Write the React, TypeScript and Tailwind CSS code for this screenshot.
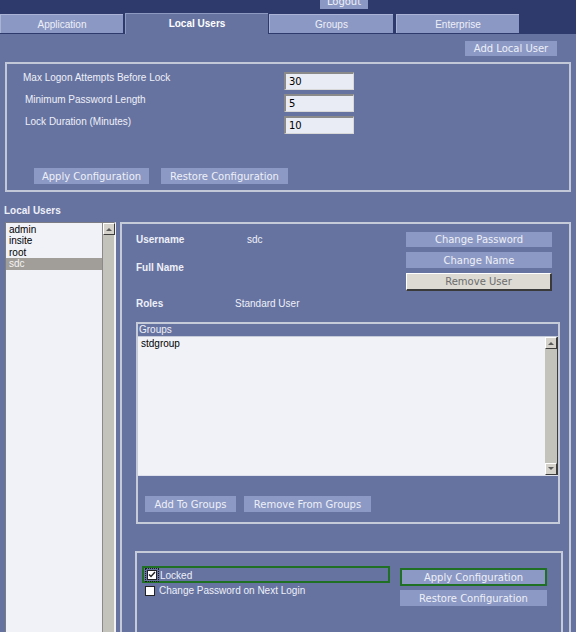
import type { ReactNode } from 'react';

const dejavu = "font-['DejaVu_Sans',sans-serif]";
const arial = "font-['Liberation_Sans',Arial,sans-serif]";

function Btn({ children, className = '' }: { children: ReactNode; className?: string }) {
  return (
    <div
      className={`flex shrink-0 items-center justify-center bg-[#8c99c4] pt-[1px] text-[10px] leading-none text-[#eef0f8] ${dejavu} ${className}`}
    >
      {children}
    </div>
  );
}

function Field({ value }: { value: string }) {
  return (
    <div
      className={`flex h-[18px] w-[70px] items-center border-t-2 border-l-2 border-r border-b border-t-[#8a8a8a] border-l-[#8a8a8a] border-r-[#d8d8d8] border-b-[#d8d8d8] bg-[#e9ebf5] pt-[1px] pl-[3px] text-[10px] leading-none text-black ${dejavu}`}
    >
      {value}
    </div>
  );
}

function ScrollArrow({ down = false }: { down?: boolean }) {
  return (
    <div className="flex h-[12px] w-[12px] items-center justify-center border-t border-l border-b border-r border-t-white border-l-white border-b-[#3c3c3c] border-r-[#3c3c3c] bg-[#d4d2cb]">
      <svg width="6" height="4" viewBox="0 0 6 4" className={down ? 'rotate-180' : ''}>
        <polygon points="0,4 3,1 6,4" fill="#5a5a5a" />
      </svg>
    </div>
  );
}

function Tab({ label, width, active = false }: { label: string; width: string; active?: boolean }) {
  return active ? (
    <div
      className={`flex h-[21px] ${width} items-center justify-center border-t border-l border-[#8e99c2] bg-[#6673a1] pb-[1px] text-[10px] font-bold text-white ${arial}`}
    >
      {label}
    </div>
  ) : (
    <div
      className={`mt-[1px] flex h-[19px] ${width} items-center justify-center border-t border-l border-[#aab3d6] bg-[#8b98c4] text-[10px] text-[#eef0f8] ${arial}`}
    >
      {label}
    </div>
  );
}

export default function App() {
  const users = ['admin', 'insite', 'root', 'sdc'];

  return (
    <div className="flex h-[632px] w-[576px] flex-col overflow-hidden bg-[#6673a1]">
      <header className="flex h-[34px] shrink-0 flex-col bg-[#2e3a6b]">
        <div className="h-[13px] pl-[320px]">
          <div className="h-[9px] w-[48px] overflow-hidden bg-[#8b98c4] text-center">
            <div className={`-mt-[3px] text-[10px] leading-[10px] text-[#eef0f8] ${dejavu}`}>Logout</div>
          </div>
        </div>
        <nav className="flex h-[21px] items-start">
          <Tab label="Application" width="w-[123px]" />
          <div className="w-[2px]" />
          <Tab label="Local Users" width="w-[143px]" active />
          <div className="w-[1px]" />
          <Tab label="Groups" width="w-[124px]" />
          <div className="w-[3px]" />
          <Tab label="Enterprise" width="w-[123px]" />
        </nav>
      </header>

      <main className="flex min-h-0 flex-1 flex-col">
        <div className="flex justify-end pt-[7px] pr-[19px]">
          <Btn className="h-[15px] w-[92px]">Add Local User</Btn>
        </div>

        <section className="mx-[5px] mt-[6px] h-[130px] shrink-0 border-2 border-[#c3c8d8] pt-[8px]">
          <div className="flex flex-col gap-[4px]">
            {[
              ['Max Logon Attempts Before Lock', '30', 'pl-[16px]'],
              ['Minimum Password Length', '5', 'pl-[18px]'],
              ['Lock Duration (Minutes)', '10', 'pl-[18px]'],
            ].map(([label, value, pad]) => (
              <div key={label} className="flex h-[18px] items-start">
                <div className={`w-[277px] ${pad} text-[10px] leading-[12px] text-[#eef0f8] ${arial}`}>
                  {label}
                </div>
                <Field value={value} />
              </div>
            ))}
          </div>
          <div className="mt-[34px] flex gap-[12px] pl-[27px]">
            <Btn className="h-[16px] w-[115px]">Apply Configuration</Btn>
            <Btn className="h-[16px] w-[127px]">Restore Configuration</Btn>
          </div>
        </section>

        <h2 className={`mt-[13px] pl-[4px] text-[10px] font-bold leading-[12px] text-[#eef0f8] ${arial}`}>
          Local Users
        </h2>

        <div className="mt-[5px] flex min-h-0 flex-1">
          <div className="ml-[5px] flex w-[111px] border-t border-l border-[#7c7c84] border-r-2 border-r-[#f2f2f2]">
            <ul className={`flex-1 bg-[#f1f2f8] pt-[1px] text-[10px] text-black ${arial}`}>
              {users.map((u) => (
                <li
                  key={u}
                  className={`h-[11.4px] pl-[3px] leading-[11.4px] ${u === 'sdc' ? 'bg-[#a19d98] text-[#f4f4f4]' : ''}`}
                >
                  {u}
                </li>
              ))}
            </ul>
            <div className="w-[12px] border-l border-[#8a8a8a] bg-[#c4c3bb]">
              <ScrollArrow />
            </div>
          </div>

          <section className="ml-[4px] flex w-[451px] flex-col border-2 border-b-0 border-[#c6cbd9]">
            <div className="flex h-[98px] shrink-0">
              <div className={`flex flex-col pl-[14px] text-[10px] leading-[12px] text-[#eef0f8] ${arial}`}>
                <div className="mt-[10px] flex">
                  <span className="w-[111px] font-bold">Username</span>
                  <span>sdc</span>
                </div>
                <div className="mt-[16px] flex">
                  <span className="font-bold">Full Name</span>
                </div>
                <div className="mt-[24px] flex">
                  <span className="w-[99px] font-bold">Roles</span>
                  <span>Standard User</span>
                </div>
              </div>
              <div className="mt-[8px] mr-[17px] ml-auto flex flex-col gap-[5px]">
                <Btn className="h-[15px] w-[146px]">Change Password</Btn>
                <Btn className="h-[16px] w-[146px]">Change Name</Btn>
                <div
                  className={`flex h-[18px] w-[146px] items-center justify-center border-t border-l border-b-2 border-r-2 border-t-white border-l-white border-b-[#3a3a3a] border-r-[#3a3a3a] bg-[#dcdad3] pt-[1px] text-[10px] leading-none text-[#6c6c6c] ${dejavu}`}
                >
                  Remove User
                </div>
              </div>
            </div>

            <fieldset className="mr-[9px] ml-[14px] flex h-[202px] shrink-0 flex-col border-2 border-[#c6cbd9]">
              <div
                className={`h-[13px] border-b border-[#c6cbd9] pl-[1px] text-[10px] leading-[12px] text-[#eef0f8] ${arial}`}
              >
                Groups
              </div>
              <div className="flex h-[139px] border-b border-[#dfe2ec]">
                <div className={`flex-1 bg-[#f1f2f8] pt-[1px] pl-[3px] text-[10px] leading-[12px] text-black ${arial}`}>
                  stdgroup
                </div>
                <div className="flex w-[13px] flex-col justify-between border-r border-[#3c3c3c] bg-[#c4c3bb]">
                  <ScrollArrow />
                  <ScrollArrow down />
                </div>
              </div>
              <div className="mt-[20px] flex gap-[8px] pl-[7px]">
                <Btn className="h-[16px] w-[91px]">Add To Groups</Btn>
                <Btn className="h-[16px] w-[127px]">Remove From Groups</Btn>
              </div>
            </fieldset>

            <div className="mt-[27px] mr-[6px] ml-[13px] flex flex-1 border-2 border-b-0 border-[#c6cbd9] pt-[13px] pl-[5px]">
              <div className={`flex w-[248px] flex-col text-[10px] text-[#eef0f8] ${arial}`}>
                <div className="flex h-[17px] items-center border-2 border-[#1f6f25] pl-[2px]">
                  <div className="flex h-[12px] w-[12px] items-center justify-center outline-1 outline-dotted outline-[#1a1a1a]">
                    <div className="flex h-[10px] w-[10px] items-center justify-center border border-[#222] bg-white">
                      <svg width="8" height="7" viewBox="0 0 8 7">
                        <path d="M1 3.5 L3 5.5 L7 1" stroke="#222" strokeWidth="1.4" fill="none" />
                      </svg>
                    </div>
                  </div>
                  <span className="mt-[2px] ml-[2px] leading-[12px]">Locked</span>
                </div>
                <div className="mt-[2px] flex h-[11px] items-center pl-[3px]">
                  <div className="h-[10px] w-[10px] border border-[#222] bg-white" />
                  <span className="mt-[1px] ml-[4px] leading-[12px]">Change Password on Next Login</span>
                </div>
              </div>
              <div className="ml-[10px] flex w-[147px] flex-col">
                <Btn className="mt-[2px] h-[18px] border-2 border-[#1f6f25]">Apply Configuration</Btn>
                <Btn className="mt-[4px] h-[16px]">Restore Configuration</Btn>
              </div>
            </div>
          </section>
        </div>
      </main>
    </div>
  );
}
